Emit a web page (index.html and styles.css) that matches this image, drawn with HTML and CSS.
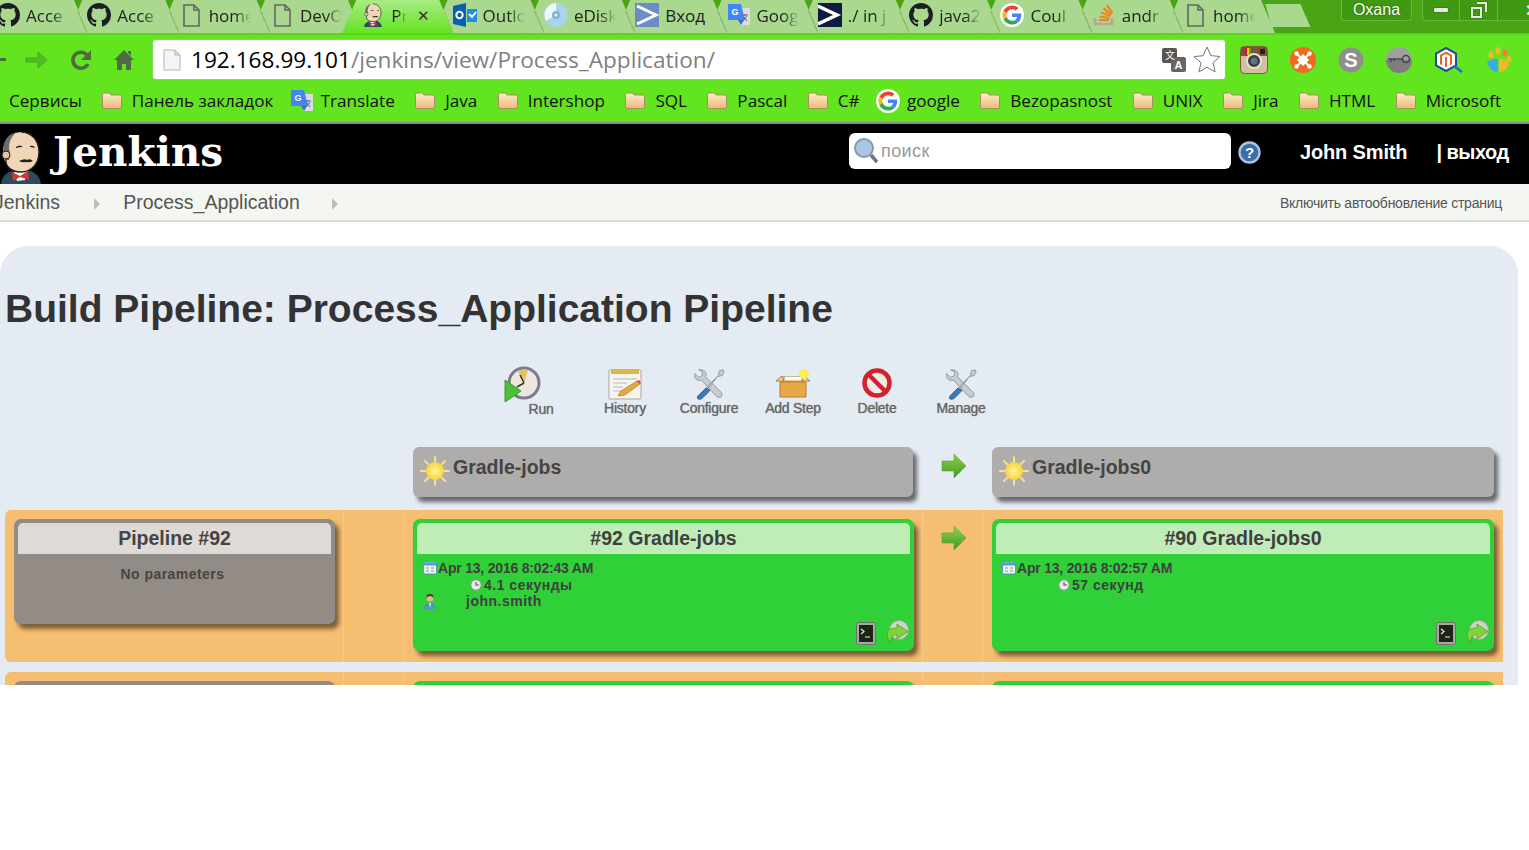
FILE: index.html
```html
<!DOCTYPE html>
<html lang="en">
<head>
  <meta charset="UTF-8">
  <title>Process_Application Pipeline</title>
  <link rel="stylesheet" href="styles.css">
</head>
<body>
  <!-- shared icons -->
  <svg class="defs" aria-hidden="true">
    <defs>
      <linearGradient id="folderFill" x1="0" y1="0" x2="0" y2="1"><stop offset="0" stop-color="#fdeccb"/><stop offset="1" stop-color="#eeba7c"/></linearGradient>
      <radialGradient id="sunFill"><stop offset="0" stop-color="#fff4a0"/><stop offset="1" stop-color="#f8d438"/></radialGradient>
      <linearGradient id="arrowFill" x1="0" y1="0" x2="0" y2="1"><stop offset="0" stop-color="#8fd24a"/><stop offset="1" stop-color="#3f9a22"/></linearGradient>
      <symbol id="github" viewBox="0 0 16 16"><path fill="#1b1f23" d="M8 0C3.58 0 0 3.58 0 8c0 3.54 2.29 6.53 5.47 7.59.4.07.55-.17.55-.38 0-.19-.01-.82-.01-1.49-2.01.37-2.53-.49-2.69-.94-.09-.23-.48-.94-.82-1.13-.28-.15-.68-.52-.01-.53.63-.01 1.08.58 1.23.82.72 1.21 1.87.87 2.33.66.07-.52.28-.87.51-1.07-1.78-.2-3.64-.89-3.64-3.95 0-.87.31-1.59.82-2.15-.08-.2-.36-1.02.08-2.12 0 0 .67-.21 2.2.82.64-.18 1.32-.27 2-.27.68 0 1.36.09 2 .27 1.53-1.04 2.2-.82 2.2-.82.44 1.1.16 1.92.08 2.12.51.56.82 1.27.82 2.15 0 3.07-1.87 3.75-3.65 3.95.29.25.54.73.54 1.48 0 1.07-.01 1.93-.01 2.2 0 .21.15.46.55.38A8.013 8.013 0 0016 8c0-4.42-3.58-8-8-8z"/></symbol>
      <symbol id="doc" viewBox="0 0 24 24"><path fill="none" stroke="#666" stroke-width="1.6" d="M5 2h10l5 5v16H5zM15 2v5h5"/></symbol>
      <symbol id="folder" viewBox="0 0 20 17"><path fill="url(#folderFill)" stroke="#a98d5f" d="M.5 2.500Q.5 1 2 1h5.500L9 3h9Q19.500 3 19.500 4.500v10.500q0 1.500-1.500 1.500H2Q.5 16.500.5 15z"/></symbol>
      <symbol id="gtrans" viewBox="0 0 24 24"><path fill="#d9dde3" d="M10 5h13v17H13z"/><path fill="#4285f4" d="M1 1h13l4 16H1z"/><path fill="#3a6fc4" d="M11 17h6l-3 5z"/><text x="4.500" y="12" font-family="Liberation Sans" font-size="9" font-weight="700" fill="#fff">G</text><path fill="none" stroke="#667" d="M15 12h6M18 11v2M16 18l4-5M17 14l3 4"/></symbol>
      <symbol id="google" viewBox="-6 -6 60 60"><circle cx="24" cy="24" r="30" fill="#fff"/><path fill="#ea4335" d="M24 9.500c3.540 0 6.710 1.220 9.210 3.600l6.850-6.850C35.900 2.380 30.470 0 24 0 14.620 0 6.510 5.380 2.560 13.220l7.980 6.190C12.430 13.720 17.740 9.500 24 9.500z"/><path fill="#4285f4" d="M46.980 24.550c0-1.570-.15-3.090-.38-4.550H24v9.020h12.940c-.58 2.960-2.260 5.480-4.780 7.180l7.730 6c4.510-4.180 7.090-10.360 7.090-17.650z"/><path fill="#fbbc05" d="M10.530 28.590c-.48-1.450-.76-2.990-.76-4.590s.27-3.140.76-4.590l-7.980-6.190C.92 16.460 0 20.120 0 24c0 3.880.92 7.540 2.560 10.780l7.970-6.190z"/><path fill="#34a853" d="M24 48c6.480 0 11.930-2.130 15.890-5.810l-7.730-6c-2.150 1.450-4.920 2.300-8.160 2.300-6.260 0-11.570-4.220-13.470-9.910l-7.980 6.190C6.510 42.620 14.620 48 24 48z"/></symbol>
      <symbol id="mascot" viewBox="0 0 44 54"><path fill="#2f4a5c" d="M2 54q1-11 12-13l14-1q12 2 14 14z"/><path fill="#fff" d="M15 42l14-1-3 9-8 1z"/><path fill="#d33833" d="M13 42l8 4 8-5 1 9-9-3-7 4z"/><ellipse cx="22" cy="22" rx="18" ry="20" fill="#f0d6b7"/><path fill="#6d6b6d" d="M8 30C1 20 4 5 18 2 10 8 9 16 11 23l-1 7z"/><path fill="none" stroke="#231f20" stroke-width="1.400" d="M22 2C33 2 40 11 40 22S33 42 22 42 6 36 7 29"/><path fill="#231f20" d="M17 17q4-3 7 0-4 0-7 1zM31 16q4-1 5 2-3-1-5-1zM20 31q6-3 8-1 3-2 6 1-4 2-7 1-4 1-7-1z"/><circle cx="7" cy="25" r="4" fill="#eac3a0" stroke="#231f20"/></symbol>
      <symbol id="outlook" viewBox="0 0 24 24"><path fill="#0a5fb4" d="M0 3l13-3v24L0 21z"/><circle cx="6.500" cy="12" r="3.200" fill="none" stroke="#fff" stroke-width="2"/><path fill="#1c8ee6" d="M14 6h10v13H14z"/><path fill="none" stroke="#fff" stroke-width="2" d="M16 11l3 3 4-5"/></symbol>
      <symbol id="cd" viewBox="0 0 24 24"><circle cx="12" cy="12" r="12" fill="#a9d4ea"/><path fill="#eef8fc" d="M12 0a12 12 0 0 0-10 18l10-6z"/><circle cx="12" cy="12" r="4" fill="#7fb5d0"/><circle cx="12" cy="12" r="1.500" fill="#e8f4fa"/></symbol>
      <symbol id="arrowBlue" viewBox="0 0 24 24"><path fill="#6b8cc4" d="M0 0h24v24H0z"/><path fill="none" stroke="#fff" stroke-width="3" d="M2 3l19 9-19 9"/></symbol>
      <symbol id="arrowDark" viewBox="0 0 24 24"><path fill="#0d1b3e" d="M0 0h24v24H0z"/><path fill="none" stroke="#fff" stroke-width="3.500" d="M0 3l19 9-19 9"/></symbol>
      <symbol id="stack" viewBox="0 0 24 24"><path fill="none" stroke="#b5a98f" stroke-width="2.500" d="M3 15v6h17v-6"/><path fill="none" stroke="#f48024" stroke-width="2.200" d="M7 17h10M7.500 13.500l10 1.500M9 9.500l9.500 3.500M11.500 5.500l8 6M15 2l5.500 8"/></symbol>
      <symbol id="wrench" viewBox="0 0 34 34"><path fill="#c8cdd2" stroke="#8d949a" d="M6 2q6-1 8 4 0 2-1 3l17 17q2 4-1 5-3 1-5-2L9 13q-5 1-7-3-1-2 0-4l4 4 4-2 0-4z"/><path fill="#3c7ab8" stroke="#2a5c8f" d="M14 21l-9 9q-1 3 1 3 2 1 4-1l8-8z"/><path fill="#c8cdd2" stroke="#8d949a" d="M16 19L27 8l1-5 4-1 1 2-2 4-5 1-10 13z"/></symbol>
      <symbol id="sun" viewBox="0 0 30 30"><g stroke="#f6dd9a" stroke-width="2" stroke-linecap="round"><path d="M15 1v5M15 24v5M1 15h5M24 15h5M5 5l3.500 3.500M21.500 21.500L25 25M25 5l-3.500 3.500M8.500 21.500L5 25"/></g><circle cx="15" cy="15" r="9" fill="url(#sunFill)"/></symbol>
      <symbol id="arrowGreen" viewBox="0 0 26 26"><path fill="url(#arrowFill)" stroke="#5c9d3a" stroke-width=".6" d="M1 8h12V1l12 12-12 12v-7H1z"/></symbol>
      <symbol id="cal" viewBox="0 0 14 14"><rect x=".5" y="1" width="13" height="12" rx="1.500" fill="#eef3f5" stroke="#4f97c4"/><path fill="#4f9fd4" d="M1 1.500h12v3H1z"/><path stroke="#7d9a8c" d="M3 7h3M8 7h3M3 10h3M8 10h3"/></symbol>
      <symbol id="clock" viewBox="0 0 12 12"><circle cx="6" cy="6" r="5.200" fill="#e8e8e8" stroke="#8b9a8b"/><path fill="none" stroke="#555" stroke-width="1.200" d="M6 3v3h3"/></symbol>
      <symbol id="user" viewBox="0 0 14 16"><path fill="#4f97b8" d="M1 16q0-6 4-6h4q4 0 4 6z"/><path fill="#e8f0f0" d="M6 10h2l-1 5z"/><circle cx="7" cy="5" r="3.500" fill="#e2b58a"/><path fill="#5b3a1c" d="M3.500 5Q3 1 7 1t3.500 4Q9 3 7 3T3.500 5z"/></symbol>
      <symbol id="terminal" viewBox="0 0 20 23"><rect x=".5" y=".5" width="19" height="22" rx="2" fill="#a6aaa0" stroke="#6f6f6f"/><rect x="3" y="3" width="14" height="17" fill="#1c2416"/><path fill="none" stroke="#e6efe0" stroke-width="1.200" d="M5 7l3 2.500L5 12M9 15h5"/></symbol>
      <symbol id="rerun" viewBox="0 0 23 24"><circle cx="13" cy="10" r="9.500" fill="#c9d8c4" stroke="#9aa89a"/><path fill="#7fd43a" stroke="#4f9a24" stroke-width=".7" d="M11 4l11 7.500L11 19v-4.500Q5 14.500 4 23-4 8 11 8z"/></symbol>
    </defs>
  </svg>

  <!-- browser window chrome -->
  <div class="tabstrip">
    <div class="tabs">
      <div class="tab"><svg class="tab-icon"><use href="#github"/></svg><span class="tab-label">Acce</span></div>
      <div class="tab"><svg class="tab-icon"><use href="#github"/></svg><span class="tab-label">Acce</span></div>
      <div class="tab"><svg class="tab-icon"><use href="#doc"/></svg><span class="tab-label">home</span></div>
      <div class="tab"><svg class="tab-icon"><use href="#doc"/></svg><span class="tab-label">DevO</span></div>
      <div class="tab tab-active"><svg class="tab-icon"><use href="#mascot"/></svg><span class="tab-label tab-label-short">Pr</span><span class="tab-close">✕</span></div>
      <div class="tab"><svg class="tab-icon"><use href="#outlook"/></svg><span class="tab-label">Outlo</span></div>
      <div class="tab"><svg class="tab-icon"><use href="#cd"/></svg><span class="tab-label">eDisk</span></div>
      <div class="tab"><svg class="tab-icon"><use href="#arrowBlue"/></svg><span class="tab-label tab-label-plain">Вход</span></div>
      <div class="tab"><svg class="tab-icon"><use href="#gtrans"/></svg><span class="tab-label">Goog</span></div>
      <div class="tab"><svg class="tab-icon"><use href="#arrowDark"/></svg><span class="tab-label">./ in j</span></div>
      <div class="tab"><svg class="tab-icon"><use href="#github"/></svg><span class="tab-label">java2</span></div>
      <div class="tab"><svg class="tab-icon"><use href="#google"/></svg><span class="tab-label">Coul</span></div>
      <div class="tab"><svg class="tab-icon"><use href="#stack"/></svg><span class="tab-label">andr</span></div>
      <div class="tab"><svg class="tab-icon"><use href="#doc"/></svg><span class="tab-label">home</span></div>
      <div class="new-tab"></div>
    </div>
    <div class="window-btns">
      <div class="user-chip">Oxana</div>
      <div class="win-btn win-first"><span class="win-min"></span></div>
      <div class="win-btn">
        <svg width="18" height="18" viewBox="0 0 18 18"><path fill="none" stroke="#3f7d1e" stroke-width="4" d="M7 2h9v9M2 7h9v9H2z"/><path fill="none" stroke="#e2eedc" stroke-width="2" d="M7 2h9v9M2 7h9v9H2z"/></svg>
      </div>
      <div class="win-btn win-close">✕</div>
    </div>
  </div>

  <div class="toolbar">
    <svg class="nav-back" width="6" height="8" viewBox="0 0 6 8"><path fill="#4c6a3a" d="M0 2h6v3H0z"/></svg>
    <svg class="nav-forward" width="24" height="20" viewBox="0 0 24 20"><path fill="#52bd25" stroke="#45a81f" d="M1 8h12V2l9 8-9 8v-6H1z"/></svg>
    <svg class="nav-reload" width="22" height="22" viewBox="0 0 22 22"><path fill="none" stroke="#4f6b44" stroke-width="3.600" d="M18 15a8 8 0 1 1-1-9"/><path fill="#4f6b44" d="M21 1v10H11z"/></svg>
    <svg class="nav-home" width="20" height="20" viewBox="0 0 20 20"><path fill="#4f6b44" d="M10 0l10 10h-3v10h-5v-6H8v6H3V10H0zM14 1h3v5l-3-3z"/></svg>
    <div class="address">
      <svg class="address-doc" width="18" height="22" viewBox="0 0 18 22"><path fill="#f5f5f5" stroke="#b5b5b5" d="M1 1h11l5 5v15H1z"/><path fill="#ddd" stroke="#b5b5b5" d="M12 1v5h5z"/></svg>
      <div class="address-text"><span class="host">192.168.99.101</span>/jenkins/view/Process_Application/</div>
      <svg class="address-translate" width="26" height="26" viewBox="0 0 26 26"><rect x="1" y="1" width="15" height="15" rx="2" fill="#555"/><rect x="10" y="10" width="15" height="15" rx="2" fill="#666"/><text x="4" y="12" font-family="Noto Sans CJK SC" font-size="10" fill="#fff">文</text><text x="13.500" y="22" font-family="Liberation Sans" font-size="11" font-weight="700" fill="#fff">A</text></svg>
      <svg class="address-star" width="28" height="28" viewBox="0 0 28 28"><path fill="#fff" stroke="#777" d="M14 1l3.800 8.600 9.200.9-7 6.200 2.100 9.200L14 21.200 5.900 26l2.100-9.200-7-6.200 9.200-.9z"/></svg>
    </div>
    <div class="extensions">
      <svg width="28" height="28" viewBox="0 0 28 28"><rect x=".5" y=".5" width="27" height="27" rx="4" fill="#d2bea0" stroke="#7d5b3c"/><path fill="#7d5236" d="M1 1h26v9H1z"/><path fill="#e04" d="M5 2h2v7H5z"/><path fill="#fc0" d="M7 2h2v7H7z"/><path fill="#4a4" d="M9 2h2v7H9z"/><circle cx="14" cy="15" r="7" fill="#3c3c3c" stroke="#e9e1d2" stroke-width="2"/><circle cx="14" cy="15" r="3.500" fill="#5a7488"/><rect x="20" y="3" width="5" height="5" fill="#2c1e14"/></svg>
      <svg width="26" height="26" viewBox="0 0 26 26"><circle cx="13" cy="13" r="13" fill="#f26a21"/><path stroke="#fff" stroke-width="2" d="M7 7l12 12M19 7L7 19"/><path fill="#fff" d="M13 7l6 6-6 6-6-6z"/><circle cx="6.500" cy="6.500" r="2.200" fill="#fff"/><circle cx="19.500" cy="6.500" r="2.200" fill="#fff"/><circle cx="6.500" cy="19.500" r="2.200" fill="#fff"/><circle cx="19.500" cy="19.500" r="2.200" fill="#fff"/></svg>
      <svg width="26" height="26" viewBox="0 0 26 26"><circle cx="13" cy="13" r="12.500" fill="#8f8f8f"/><text x="13" y="20" text-anchor="middle" font-family="Liberation Sans" font-weight="700" font-size="20" fill="#fff">S</text></svg>
      <svg width="26" height="26" viewBox="0 0 26 26"><circle cx="13" cy="13" r="13" fill="#a0a0a0"/><path fill="#7e7e7e" d="M0 13h26a13 13 0 0 1-26 0z"/><path fill="none" stroke="#444" stroke-width="1.500" d="M2 12h14M5 12v3M8 12v2"/><circle cx="20" cy="12" r="3.500" fill="none" stroke="#444" stroke-width="1.500"/></svg>
      <svg width="30" height="26" viewBox="0 0 30 26"><path fill="#fff" stroke="#1a4f9c" stroke-width="2" d="M12 1l10 5.500v12L12 24 2 18.500v-12z"/><path fill="#e8622c" d="M6 8l6-3.500L18 8v9l-2 1.500V9l-4-2-4 2v9.500L6 17zM11 10h2v10h-2z"/><path stroke="#1a6fc0" stroke-width="2.500" d="M20 19l8 6"/></svg>
      <svg width="26" height="26" viewBox="0 0 26 26"><path fill="#3da9e8" d="M1 15q5-4 11-3v13Q4 25 1 15z"/><path fill="#f5b62a" d="M13 12q7-1 10 5-3 8-10 8z"/><ellipse cx="5" cy="8" rx="2.500" ry="3.500" fill="#f5b62a"/><ellipse cx="12" cy="4" rx="2.500" ry="4" fill="#f5b62a"/><ellipse cx="19" cy="6" rx="2.500" ry="3.500" fill="#f0842c"/><ellipse cx="23" cy="12" rx="2.500" ry="3" fill="#f5b62a"/></svg>
    </div>
  </div>

  <div class="bookmarks">
    <span class="bm bm-first">Сервисы</span>
    <span class="bm"><svg class="bm-icon"><use href="#folder"/></svg>Панель закладок</span>
    <span class="bm"><svg class="bm-icon bm-icon-g"><use href="#gtrans"/></svg>Translate</span>
    <span class="bm"><svg class="bm-icon"><use href="#folder"/></svg>Java</span>
    <span class="bm"><svg class="bm-icon"><use href="#folder"/></svg>Intershop</span>
    <span class="bm"><svg class="bm-icon"><use href="#folder"/></svg>SQL</span>
    <span class="bm"><svg class="bm-icon"><use href="#folder"/></svg>Pascal</span>
    <span class="bm"><svg class="bm-icon"><use href="#folder"/></svg>C#</span>
    <span class="bm"><svg class="bm-icon bm-icon-g"><use href="#google"/></svg>google</span>
    <span class="bm"><svg class="bm-icon"><use href="#folder"/></svg>Bezopasnost</span>
    <span class="bm"><svg class="bm-icon"><use href="#folder"/></svg>UNIX</span>
    <span class="bm"><svg class="bm-icon"><use href="#folder"/></svg>Jira</span>
    <span class="bm"><svg class="bm-icon"><use href="#folder"/></svg>HTML</span>
    <span class="bm"><svg class="bm-icon"><use href="#folder"/></svg>Microsoft</span>
  </div>

  <!-- jenkins page -->
  <header class="page-header">
    <svg class="logo-mascot"><use href="#mascot"/></svg>
    <div class="logo-text">Jenkins</div>
    <div class="search">
      <svg width="24" height="26" viewBox="0 0 24 26"><circle cx="10" cy="10" r="9" fill="#a9c8e4" stroke="#8a97a4" stroke-width="2"/><path stroke="#6e7780" stroke-width="3.500" d="M17 17l6 7"/></svg>
      <span>поиск</span>
    </div>
    <svg class="help" width="23" height="23" viewBox="0 0 23 23"><circle cx="11.500" cy="11.500" r="10" fill="#3b6ea8" stroke="#a9c4e2" stroke-width="2.400"/><text x="11.500" y="17" text-anchor="middle" font-family="Liberation Sans" font-weight="700" font-size="15" fill="#fff">?</text></svg>
    <div class="user-name">John Smith</div>
    <div class="logout">| выход</div>
  </header>

  <nav class="breadcrumb">
    <span class="crumb crumb-root">Jenkins</span>
    <span class="crumb-arrow crumb-arrow-root"></span>
    <span class="crumb">Process_Application</span>
    <span class="crumb-arrow"></span>
    <span class="auto-refresh">Включить автообновление страниц</span>
  </nav>

  <main class="panel">
    <h1>Build Pipeline: Process_Application Pipeline</h1>

    <div class="actions">
      <div class="action action-run">
        <svg width="38" height="36" viewBox="0 0 38 36"><circle cx="20" cy="17" r="15" fill="#ece8de" stroke="#7d7a92" stroke-width="3"/><path fill="#e3c45c" d="M20 17L14 5q6-3 10-1z"/><path fill="none" stroke="#333" stroke-width="1.500" d="M20 17l-4-8M20 17l-7 4"/><path fill="#4cc03a" stroke="#3a9a2a" d="M1 14l16 11-16 11z"/></svg>
        <span>Run</span>
      </div>
      <div class="action">
        <svg width="34" height="32" viewBox="0 0 34 32"><rect x="1" y="2" width="32" height="29" rx="1" fill="#f6f4ec" stroke="#a8a8a0"/><path fill="#d8b84c" d="M3 1h28v5H3z"/><path stroke="#b8b8c0" d="M5 11h24M5 15h14M5 19h10M5 23h8"/><path fill="#e8a83c" stroke="#96702a" stroke-width=".6" d="M10 28l3-5 16-10 3 3-15 11z"/><path fill="#d9423a" d="M29 13l2-1 2 3-1 1z"/></svg>
        <span>History</span>
      </div>
      <div class="action">
        <svg width="32" height="32"><use href="#wrench"/></svg>
        <span>Configure</span>
      </div>
      <div class="action">
        <svg width="36" height="30" viewBox="0 0 36 30"><path fill="#e8c892" stroke="#a87c3c" d="M6 8h24l-2 5H8z"/><path fill="#fff" d="M10 8h16v3H10z"/><path fill="#e8a848" stroke="#b07e30" d="M5 13h26v15H5z"/><path fill="#f4d49a" stroke="#a87c3c" d="M1 12l6-5 2 5zM35 12l-6-5-2 5z"/><circle cx="29" cy="5" r="4.500" fill="#fff04a" stroke="#f2e08a"/></svg>
        <span>Add Step</span>
      </div>
      <div class="action">
        <svg width="32" height="32" viewBox="0 0 32 32"><circle cx="16" cy="15" r="12.500" fill="#f4e8e8" stroke="#d2232a" stroke-width="4.500"/><path stroke="#d2232a" stroke-width="4.500" d="M8 7l16 16"/></svg>
        <span>Delete</span>
      </div>
      <div class="action">
        <svg width="32" height="32"><use href="#wrench"/></svg>
        <span>Manage</span>
      </div>
    </div>

    <div class="pipeline-grid head-row">
      <div class="cell"></div>
      <div class="cell"></div>
      <div class="cell">
        <div class="job-head">
          <svg class="sun"><use href="#sun"/></svg><span>Gradle-jobs</span>
        </div>
      </div>
      <div class="cell cell-arrow cell-arrow-head"><svg class="arrow"><use href="#arrowGreen"/></svg></div>
      <div class="cell cell-last">
        <div class="job-head">
          <svg class="sun"><use href="#sun"/></svg><span>Gradle-jobs0</span>
        </div>
      </div>
    </div>

    <div class="pipeline-grid run-row">
      <div class="cell">
        <div class="pipe-card">
          <div class="pipe-title">Pipeline #92</div>
          <div class="pipe-params">No parameters</div>
        </div>
      </div>
      <div class="cell cell-line"></div>
      <div class="cell cell-line">
        <div class="build-card">
          <div class="build-title">#92 Gradle-jobs</div>
          <div class="meta meta-date"><svg class="meta-cal"><use href="#cal"/></svg>Apr 13, 2016 8:02:43 AM</div>
          <div class="meta meta-time"><svg class="meta-clock"><use href="#clock"/></svg>4.1 секунды</div>
          <div class="meta meta-user"><svg class="meta-usr"><use href="#user"/></svg><span class="user-text">john.smith</span></div>
          <div class="build-tools">
            <svg class="tool-term"><use href="#terminal"/></svg>
            <svg class="tool-rerun"><use href="#rerun"/></svg>
          </div>
        </div>
      </div>
      <div class="cell cell-line cell-arrow"><svg class="arrow"><use href="#arrowGreen"/></svg></div>
      <div class="cell cell-line cell-last">
        <div class="build-card">
          <div class="build-title">#90 Gradle-jobs0</div>
          <div class="meta meta-date"><svg class="meta-cal"><use href="#cal"/></svg>Apr 13, 2016 8:02:57 AM</div>
          <div class="meta meta-time meta-time-wide"><svg class="meta-clock"><use href="#clock"/></svg>57 секунд</div>
          <div class="build-tools">
            <svg class="tool-term"><use href="#terminal"/></svg>
            <svg class="tool-rerun"><use href="#rerun"/></svg>
          </div>
        </div>
      </div>
    </div>

    <div class="pipeline-grid run-row">
      <div class="cell"><div class="pipe-card"></div></div>
      <div class="cell cell-line"></div>
      <div class="cell cell-line"><div class="build-card"></div></div>
      <div class="cell cell-line"></div>
      <div class="cell cell-line cell-last"><div class="build-card"></div></div>
    </div>
  </main>
</body>
</html>
```

FILE: styles.css
```css
* {
  box-sizing: border-box;
}
body {
  margin: 0;
  height: 850px;
  overflow: hidden;
  background: #ffffff;
  font-family: 'Liberation Sans', Arial, sans-serif;
}
.defs {
  display: block;
  width: 0;
  height: 0;
}

/* browser chrome */
.tabstrip {
  display: flex;
  height: 35px;
  overflow: hidden;
  background: #4aa516;
  border-bottom: 2px solid #5cd31c;
}
.tabs {
  display: flex;
  width: 1363px;
  margin-left: -23px;
  flex: none;
}
.tab {
  position: relative;
  display: flex;
  align-items: center;
  flex: none;
  width: 111px;
  height: 33px;
  margin-right: -19.7px;
  padding-left: 19px;
  padding-bottom: 3px;
  background: #a9d88e;
  clip-path: polygon(0 100%, 14px 0, calc(100% - 14px) 0, 100% 100%);
  font-family: 'Open Sans', sans-serif;
  font-size: 17px;
  color: #222;
}
.tab::after {
  content: '';
  position: absolute;
  left: 5px;
  top: 0;
  width: 14px;
  height: 33px;
  background: linear-gradient(to top right, transparent 47%, #8cc06e 47%, #8cc06e 53%, transparent 53%);
}
.tab-active {
  z-index: 2;
  background: linear-gradient(#a8ec84, #64e320);
}
.tab-active::after {
  display: none;
}
.tab-icon {
  flex: none;
  width: 24px;
  height: 24px;
}
.tab-label {
  display: block;
  flex: none;
  width: 50px;
  margin-left: 6px;
  white-space: nowrap;
  -webkit-mask-image: linear-gradient(to right, #000 26px, transparent 42px);
  mask-image: linear-gradient(to right, #000 26px, transparent 42px);
}
.tab-label-short {
  width: 16px;
  -webkit-mask-image: linear-gradient(to right, #000 6px, transparent 16px);
  mask-image: linear-gradient(to right, #000 6px, transparent 16px);
}
.tab-label-plain {
  -webkit-mask-image: none;
  mask-image: none;
}
.tab-close {
  margin-left: 10px;
  font-size: 15px;
  color: #333;
}
.new-tab {
  flex: none;
  width: 45px;
  height: 23px;
  margin: 4px 0 0 10px;
  background: #a9d88e;
  clip-path: polygon(0 0, 78% 0, 100% 100%, 14% 100%);
}
.window-btns {
  display: flex;
  flex: none;
  height: 21px;
  margin-left: 1px;
}
.user-chip {
  width: 71px;
  height: 21px;
  border: 1px solid #6cb83c;
  border-top: none;
  border-radius: 0 0 4px 4px;
  background: #3f9a12;
  color: #fff;
  font-size: 16px;
  line-height: 19px;
  text-align: center;
  text-shadow: 0 0 2px #1f4f08;
}
.win-btn {
  display: flex;
  justify-content: center;
  align-items: center;
  flex: none;
  width: 38px;
  background: #3f9a12;
  border: 1px solid #6cb83c;
  border-top: none;
  border-left: none;
}
.win-first {
  margin-left: 10px;
  border-left: 1px solid #6cb83c;
  border-radius: 0 0 0 4px;
}
.win-close {
  width: 40px;
  justify-content: flex-end;
  padding-right: 0;
  border-right: none;
  font-size: 16px;
  font-weight: bold;
  color: #e8f2e0;
}
.win-min {
  width: 16px;
  height: 6px;
  background: #e2eedc;
  border: 1px solid #3f7d1e;
  border-radius: 2px;
}

.toolbar {
  display: flex;
  align-items: center;
  height: 50px;
  background: #62e41f;
}
.nav-back {
  flex: none;
}
.nav-forward {
  flex: none;
  margin-left: 19px;
}
.nav-reload {
  flex: none;
  margin-left: 21px;
}
.nav-home {
  flex: none;
  margin-left: 22px;
}
.address {
  display: flex;
  align-items: center;
  flex: none;
  width: 1072px;
  height: 39px;
  margin: 0 0 1px 19px;
  padding-left: 10px;
  background: #ffffff;
  border-radius: 3px;
  box-shadow: 0 0 0 1px #86d85a;
}
.address-doc {
  flex: none;
}
.address-text {
  flex: 1;
  margin-left: 10px;
  font-family: 'Open Sans', sans-serif;
  font-size: 22.6px;
  color: #7f7f7f;
  white-space: nowrap;
}
.host {
  color: #000;
}
.address-translate {
  flex: none;
}
.address-star {
  flex: none;
  margin: 0 4px 0 6px;
}
.extensions {
  display: flex;
  align-items: center;
  gap: 22px;
  margin-left: 15px;
}

.bookmarks {
  display: flex;
  align-items: center;
  height: 37px;
  padding: 0 0 6px 9px;
  background: #62e41f;
  font-family: 'Open Sans', sans-serif;
  font-size: 17.1px;
  color: #111;
  white-space: nowrap;
}
.bm {
  display: flex;
  align-items: center;
  margin-right: 20.4px;
}
.bm-first {
  margin-right: 20px;
}
.bm-icon {
  flex: none;
  width: 20px;
  height: 17px;
  margin-right: 10px;
}
.bm-icon-g {
  width: 24px;
  height: 24px;
  margin: 0 7px 0 -4px;
}

/* jenkins header */
.page-header {
  display: flex;
  align-items: center;
  height: 62px;
  padding-bottom: 4px;
  background: #000000;
  border-top: 2px solid #8a8a8a;
  overflow: hidden;
  color: #fff;
}
.logo-mascot {
  flex: none;
  width: 44px;
  height: 54px;
  margin: 10px 0 0 -1px;
}
.logo-text {
  flex: none;
  width: 796px;
  margin-left: 10px;
  font-family: 'DejaVu Serif', serif;
  font-size: 40.5px;
  font-weight: bold;
  line-height: 50px;
}
.search {
  display: flex;
  align-items: center;
  flex: none;
  width: 382px;
  height: 36px;
  margin-bottom: 2px;
  padding-left: 5px;
  background: #ffffff;
  border-radius: 6px;
  font-size: 18px;
  color: #9a9a9a;
}
.search span {
  margin-left: 3px;
  letter-spacing: .4px;
}
.help {
  flex: none;
  margin-left: 7px;
}
.user-name {
  flex: none;
  margin-left: 39px;
  font-size: 20px;
  font-weight: bold;
  letter-spacing: -.15px;
}
.logout {
  flex: none;
  margin-left: 29px;
  font-size: 20px;
  font-weight: bold;
  letter-spacing: -.5px;
}

.breadcrumb {
  display: flex;
  align-items: center;
  height: 38px;
  padding-top: 1px;
  background: #f4f7f1;
  border-bottom: 2px solid #d8dad6;
  font-size: 19.5px;
  color: #555;
}
.crumb-root {
  margin-left: -6px;
}
.crumb-arrow {
  width: 0;
  height: 0;
  margin: 2px 23px 0 32px;
  border-left: 6px solid #bdbdbd;
  border-top: 6px solid transparent;
  border-bottom: 6px solid transparent;
}
.crumb-arrow-root {
  margin-left: 34px;
}
.auto-refresh {
  margin-left: auto;
  margin-right: 27px;
  font-size: 14px;
  letter-spacing: -.25px;
}

/* pipeline panel */
.panel {
  width: 1518px;
  height: 439px;
  margin-top: 24px;
  padding-left: 5px;
  overflow: hidden;
  background: #e4ebf3;
  border-radius: 28px 28px 0 0;
}
h1 {
  margin: 38px 0 0;
  font-size: 39px;
  line-height: 50px;
  color: #333;
}
.actions {
  display: flex;
  height: 81px;
  margin: 32px 0 0 494px;
}
.action {
  display: flex;
  flex-direction: column;
  align-items: center;
  width: 84px;
  height: 50px;
  font-size: 14px;
  letter-spacing: -.25px;
  color: #666;
  text-shadow: 0 0 1px #777;
}
.action svg {
  flex: none;
  margin: auto 0;
}
.action span {
  line-height: 15px;
}
.action-run svg {
  margin: 0 0 0 -36px;
}
.pipeline-grid {
  display: grid;
  grid-template-columns: 338px 60px 519px 60px 521px;
  width: 1498px;
}
.head-row {
  height: 63px;
}
.run-row {
  min-height: 152px;
  margin-bottom: 10px;
  background: #f5be70;
  border-radius: 6px 0 0 6px;
}
.cell {
  min-width: 0;
}
.cell-line {
  border-left: 1px solid #f8c98a;
}
.cell-arrow {
  display: flex;
  justify-content: center;
  padding-left: 2px;
}
.cell-arrow-head {
  padding: 6px 0 0 4px;
}
.job-head {
  display: flex;
  height: 50px;
  margin: 0 9px 0 10px;
  padding: 9px 0 0 7px;
  background: #afacac;
  border-radius: 6px;
  box-shadow: 4px 5px 4px rgba(0, 0, 0, .55);
  font-size: 19.5px;
  font-weight: bold;
  color: #444;
}
.cell-last .job-head {
  margin-right: 9px;
}
.sun {
  flex: none;
  width: 30px;
  height: 30px;
  margin-right: 3px;
}
.arrow {
  width: 26px;
  height: 26px;
  margin-top: 15px;
}
.cell-arrow-head .arrow {
  margin-top: 0;
}
.pipe-card {
  height: 105px;
  margin: 9px 8px 0 9px;
  padding: 4px;
  background: #938b85;
  border-radius: 7px;
  box-shadow: 4px 5px 4px rgba(0, 0, 0, .5);
  color: #444;
}
.pipe-title {
  height: 31px;
  background: #dfdad5;
  border-radius: 5px 5px 0 0;
  font-size: 19.5px;
  font-weight: bold;
  line-height: 31px;
  text-align: center;
}
.pipe-params {
  margin-top: 12px;
  padding-right: 4px;
  font-size: 14px;
  font-weight: bold;
  letter-spacing: .45px;
  text-align: center;
}
.build-card {
  position: relative;
  height: 132px;
  margin: 9px 8px 0 9px;
  padding: 4px;
  background: #30d038;
  border-radius: 7px;
  box-shadow: 4px 5px 4px rgba(0, 0, 0, .5);
  font-size: 14px;
  font-weight: bold;
  color: #3f3f3f;
}
.cell-last .build-card {
  margin-right: 9px;
}
.build-title {
  height: 31px;
  margin-bottom: 6px;
  background: #c0ecb8;
  border-radius: 5px 5px 0 0;
  font-size: 19.5px;
  line-height: 31px;
  text-align: center;
}
.meta {
  display: flex;
  align-items: center;
  height: 16.5px;
  padding-left: 6px;
  letter-spacing: .5px;
}
.meta-date {
  letter-spacing: -.2px;
}
.meta-cal {
  flex: none;
  width: 14px;
  height: 14px;
  margin-right: 1px;
}
.meta-time {
  padding-left: 53px;
}
.meta-time-wide {
  padding-left: 62px;
}
.meta-clock {
  flex: none;
  width: 12px;
  height: 12px;
  margin-right: 2px;
}
.meta-usr {
  flex: none;
  width: 14px;
  height: 16px;
}
.user-text {
  margin-left: 29px;
}
.build-tools {
  position: absolute;
  right: 5px;
  bottom: 6px;
  display: flex;
  align-items: flex-end;
  gap: 10px;
}
.tool-term {
  width: 20px;
  height: 23px;
}
.tool-rerun {
  width: 23px;
  height: 24px;
  margin-bottom: 1px;
}
```
